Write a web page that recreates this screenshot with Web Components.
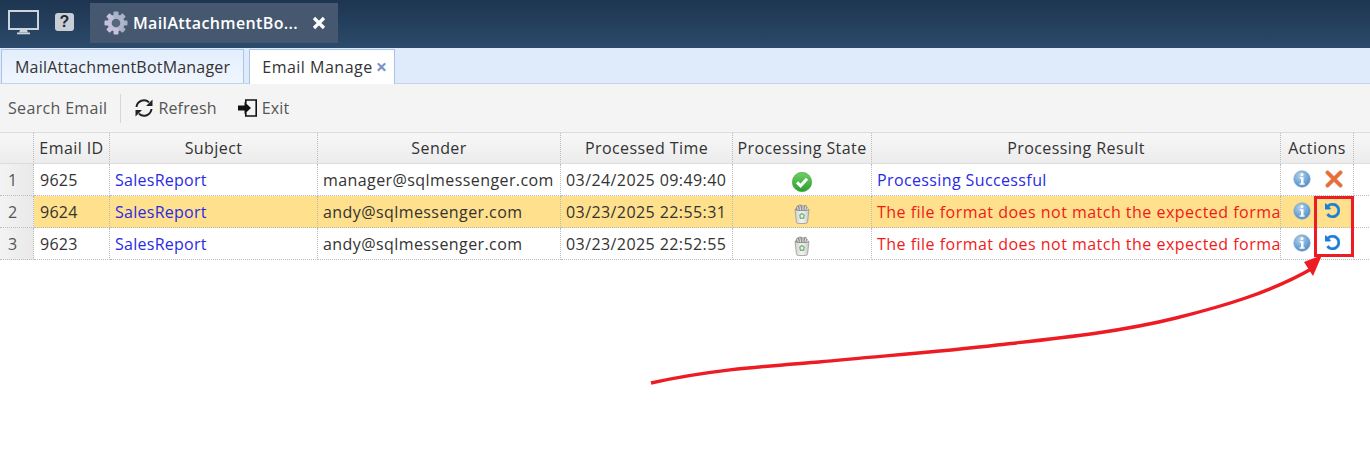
<!DOCTYPE html>
<html><head><meta charset="utf-8"><style>
html,body{margin:0;padding:0;background:#fff;height:451px;overflow:hidden}
body{font-family:"Open Sans","Noto Sans",sans-serif;font-size:16px;color:#333;position:relative}
</style></head><body>
<app-titlebar></app-titlebar>
<app-tabs></app-tabs>
<app-toolbar></app-toolbar>
<email-grid></email-grid>
<annot-layer></annot-layer>
<script>
const GEAR='<svg width="26" height="26" viewBox="0 0 26 26"><defs><linearGradient id="g" x1="0" y1="0" x2="0" y2="1"><stop offset="0" stop-color="#a4b0c2"/><stop offset="1" stop-color="#cbc3e2"/></linearGradient></defs><g fill="url(#g)"><circle cx="13" cy="13" r="8.500"/><rect x="10.500" y="1.500" width="5" height="23" rx="1"/><rect x="10.500" y="1.500" width="5" height="23" rx="1" transform="rotate(45 13 13)"/><rect x="10.500" y="1.500" width="5" height="23" rx="1" transform="rotate(90 13 13)"/><rect x="10.500" y="1.500" width="5" height="23" rx="1" transform="rotate(135 13 13)"/></g><circle cx="13" cy="13" r="4.300" fill="#56667c"/></svg>';
const INFO='<svg width="18" height="18" viewBox="0 0 18 18"><defs><radialGradient id="i" cx=".4" cy=".3" r=".8"><stop offset="0" stop-color="#b5d4ee"/><stop offset="1" stop-color="#3f84c4"/></radialGradient></defs><circle cx="9" cy="9" r="8.200" fill="url(#i)" stroke="#7ba6cf" stroke-width=".7"/><circle cx="9" cy="4.400" r="1.500" fill="#fff"/><path d="M6.800 7.200h3.700v6h1.200v1.600H6.600v-1.600h1.400V8.800H6.800z" fill="#fff"/></svg>';
const CROSS='<svg width="18" height="18" viewBox="0 0 18 18"><path d="M2.500 2.500 15.500 15.500M15.500 2.500 2.500 15.500" stroke="#d9b3a0" stroke-width="4.400" stroke-linecap="round"/><path d="M2.500 2.500 15.500 15.500M15.500 2.500 2.500 15.500" stroke="#ea6d35" stroke-width="3.200" stroke-linecap="round"/></svg>';
const UNDO='<svg width="15" height="15" viewBox="0 0 1536 1536"><path fill="#1c7ed6" stroke="#1c7ed6" stroke-width="40" d="M1536 768q0 156-61 298t-164 245-245 164-298 61q-172 0-327-72.500T177 1259q-7-10-6.500-22.500T179 1216l137-138q10-9 25-9 16 2 23 12 73 95 179 147t225 52q104 0 198.500-40.500T1130 1130t109.500-163.500T1280 768t-40.500-198.500T1130 406 966.500 296.500 768 256q-98 0-188 35.500T420 393l137 138q31 30 14 69-17 40-59 40H64q-26 0-45-19T0 576V128q0-42 40-59 39-17 69 14l130 129q107-101 244.500-156.500T768 0q156 0 298 61t245 164 164 245 61 298z"/></svg>';
const CHECK='<svg width="20" height="20" viewBox="0 0 20 20" style="margin-top:4px"><defs><linearGradient id="c" x1="0" y1="0" x2="0" y2="1"><stop offset="0" stop-color="#72cf66"/><stop offset="1" stop-color="#27a02e"/></linearGradient></defs><circle cx="10" cy="10" r="9.700" fill="url(#c)" stroke="#3a9a3a" stroke-width=".6"/><path d="M5 10.400 8.600 13.800 15 6.800" fill="none" stroke="#fff" stroke-width="3"/></svg>';
const BIN='<svg width="16" height="20" viewBox="0 0 16 20" style="margin-top:5px"><defs><linearGradient id="b" x1="0" y1="0" x2="1" y2="0"><stop offset="0" stop-color="#d0d2ce"/><stop offset=".5" stop-color="#f4f5f2"/><stop offset="1" stop-color="#c8cac7"/></linearGradient></defs><path d="M1 5.500 2.400 17.600q.2 1.900 2 1.900h7.200q1.800 0 2-1.900L15 5.500z" fill="url(#b)" stroke="#969996" stroke-width=".8"/><path d="M1 6 2.600 2 6 .6 9 1.400 12 .8 15 6l-3 1H4z" fill="#8f928f"/><path d="M3 2.800 4.500 6M5.800 1.500 6.500 6M9 1.500V6M12 1.800 11 6M13.600 4 12.800 6" stroke="#eee" stroke-width=".9"/><path d="M8 9.500l2.200 1.800-.7 3H6.500l-.7-3z" fill="none" stroke="#7ab67b" stroke-width="1.400"/></svg>';

function def(name,css,html){
  customElements.define(name,class extends HTMLElement{
    constructor(){super();const s=this.attachShadow({mode:'open'});s.innerHTML='<style>'+css+'</style>'+html;}
  });
}

def('app-titlebar',`
:host{display:flex;align-items:center;height:48px;box-sizing:border-box;background:linear-gradient(#1d3550,#2c4a6b);padding:3px 0 5px 8px}
.mon{display:block;margin-right:15px}
.help{display:flex;align-items:center;justify-content:center;width:19px;height:18px;border-radius:3px;background:#c9ced4;color:#1a2a3a;font:700 16px "Liberation Sans",sans-serif;margin:-2px 16px 0 0}
.tab{display:flex;align-items:center;width:248px;height:40px;box-sizing:border-box;background:#45586f;padding-left:13px;color:#fff;font-weight:600;font-size:16px;letter-spacing:.37px}
.tab svg{margin-right:4px}
.t{width:179px;white-space:nowrap}
.x{display:block}
`,`<svg class="mon" width="32" height="26" viewBox="0 0 32 26"><rect x="1" y="1" width="29" height="18" fill="none" stroke="#cdd4dc" stroke-width="2"/><path d="M12 20h7l1 2.500H11z" fill="#cdd4dc"/><rect x="9" y="22.500" width="13" height="1.800" fill="#cdd4dc"/></svg>
<span class="help">?</span>
<div class="tab">${GEAR}<span class="t">MailAttachmentBo...</span><svg class="x" width="14" height="14" viewBox="0 0 14 14"><path d="M2 2 12 12M12 2 2 12" stroke="#fff" stroke-width="3.200"/></svg></div>`);

def('app-tab',`
:host{display:flex;align-items:center;height:34px;box-sizing:border-box;border:1px solid #a9c4e8;border-bottom:0;background:linear-gradient(#e3eefc,#f0f6ff);color:#333;font-size:16px;padding:0 13px;white-space:nowrap;letter-spacing:.2px}
:host([active]){background:#fff;height:35px;padding:0 7px 0 12px;margin-bottom:-1px;letter-spacing:.5px}
`,`<slot></slot>`);
def('app-tabs',`
:host{display:flex;align-items:flex-end;gap:5px;height:36px;box-sizing:border-box;padding-left:1px;background:#dfeafb;border-bottom:1px solid #c3d3ea}
.x{color:#7d93c8;margin-left:3px;font-size:20px;line-height:1;font-weight:700;letter-spacing:0}
`,`<app-tab>MailAttachmentBotManager</app-tab><app-tab active>Email Manage<span class="x">×</span></app-tab>`);

def('app-toolbar',`
:host{display:flex;align-items:center;height:48px;box-sizing:border-box;background:#f4f4f4;padding-left:8px;color:#555;font-size:16px;letter-spacing:.33px}
.sep{width:1px;height:29px;background:#d6d6d6;margin:0 13px}
.b{display:flex;align-items:center;gap:4px;letter-spacing:.15px}
.b+.b{margin-left:21px}
`,`<span>Search Email</span><span class="sep"></span>
<span class="b"><svg width="20" height="20" viewBox="0 0 20 20"><path d="M2.500 9A7.500 7.500 0 0 1 15 4.200M17.500 11A7.500 7.500 0 0 1 5 15.800" fill="none" stroke="#222" stroke-width="2"/><path d="M18.500 1.500V8H12zM1.500 18.500V12H8z" fill="#222"/></svg>Refresh</span>
<span class="b"><svg width="20" height="20" viewBox="0 0 20 20"><path d="M7 1.200h12v17.600H7v-4.500h1.600v3H17.400V2.800H8.600v3H7z" fill="#111"/><path d="M0 7.500h6.500V4l6.500 6-6.500 6v-3.500H0z" fill="#111"/></svg>Exit</span>`);

def('grid-row',`
:host{display:grid;grid-template-columns:var(--cols);height:32px;box-sizing:border-box}
`,`<slot></slot>`);
def('grid-cell',`
:host{display:flex;align-items:center;box-sizing:border-box;border-right:1px dotted #bbb;border-bottom:1px dotted #bbb;padding:0 0 0 5px;white-space:nowrap;overflow:hidden;color:#333;font-size:16px;min-width:0;letter-spacing:.42px}
:host([h]){background:linear-gradient(#f7f7f7,#ececec);justify-content:center;border-bottom:1px solid #ddd;padding:0}
:host([n]){background:linear-gradient(90deg,#f3f3f3,#e9e9e9);padding-left:8px;color:#555}
:host([num]){padding-left:6px;letter-spacing:.25px}
:host([c]){justify-content:center;padding:0}
:host([a]){justify-content:flex-start;padding:0 0 0 12px;gap:14px}
:host([blue]){color:#2a2ae6;letter-spacing:.38px}
:host([link]){letter-spacing:.27px}
:host([red]){color:#f01a1a;letter-spacing:.48px}
:host([hl]){background:#ffe08c}
:host([up]){padding-bottom:2px}
`,`<slot></slot>`);

function row(n,id,sender,time,state,res,act,hl){
  const h=hl?' hl':'';
  return `<grid-row><grid-cell n>${n}</grid-cell><grid-cell num${h}>${id}</grid-cell><grid-cell blue link${h}>SalesReport</grid-cell><grid-cell${h}>${sender}</grid-cell><grid-cell${h}>${time}</grid-cell><grid-cell c${h}>${state}</grid-cell><grid-cell ${res}${h}>${res=='blue'?'Processing Successful':'The file format does not match the expected forma'}</grid-cell><grid-cell a up${h}>${act}</grid-cell><grid-cell></grid-cell></grid-row>`;
}
def('email-grid',`
:host{display:block;--cols:34px 76px 208px 243px 172px 139px 409px 73px 17px;border-top:1px solid #ddd}
`,`<grid-row style="height:31px"><grid-cell h></grid-cell><grid-cell h>Email ID</grid-cell><grid-cell h>Subject</grid-cell><grid-cell h>Sender</grid-cell><grid-cell h>Processed Time</grid-cell><grid-cell h>Processing State</grid-cell><grid-cell h>Processing Result</grid-cell><grid-cell h>Actions</grid-cell><grid-cell h style="border-right:0"></grid-cell></grid-row>`
+row(1,9625,'manager@sqlmessenger.com','03/24/2025 09:49:40',CHECK,'blue',INFO+CROSS,false)
+row(2,9624,'andy@sqlmessenger.com','03/23/2025 22:55:31',BIN,'red',INFO+UNDO,true)
+row(3,9623,'andy@sqlmessenger.com','03/23/2025 22:52:55',BIN,'red',INFO+UNDO,false));

def('annot-layer',`
:host{position:absolute;left:0;top:0;width:1370px;height:451px;pointer-events:none}
svg{display:block}
`,`<svg width="1370" height="451" viewBox="0 0 1370 451"><rect x="1315.500" y="197.500" width="37" height="58" fill="none" stroke="#ed1c24" stroke-width="3"/>
<path d="M651 383C715 369 770 366 819 362C880 356 940 352 997 345C1060 338 1120 332 1176 318C1220 307 1270 293 1313 268" fill="none" stroke="#ed1c24" stroke-width="3.400"/>
<path d="M1304 262 1322 255 1313 276z" fill="#ed1c24"/></svg>`);
</script>
</body></html>
